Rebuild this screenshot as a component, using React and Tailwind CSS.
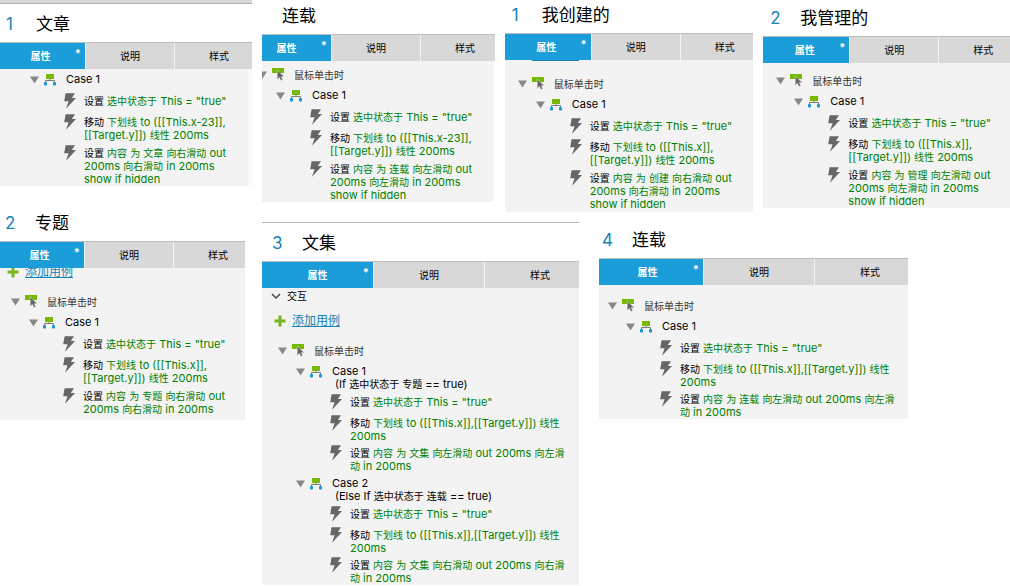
import { useState } from "react";

const panels = {
  article: {
    number: "1",
    title: "文章",
    heading: "h-[38px]",
    shift: "-ml-1",
    body: "pt-0.5 pb-px border-r-4 border-[#fafafa]",
    cases: [
      {
        name: "Case 1",
        actions: [
          ["设置", '选中状态于 This = "true"'],
          ["移动", "下划线 to ([[This.x-23]],[[Target.y]]) 线性 200ms"],
          ["设置", "内容 为 文章 向右滑动 out 200ms 向右滑动 in 200ms show if hidden"],
        ],
      },
    ],
  },
  topic: {
    number: "2",
    title: "专题",
    heading: "h-[38px]",
    shift: "-ml-[5px]",
    body: "pb-1",
    addCase: "-mt-1.5",
    event: true,
    cases: [
      {
        name: "Case 1",
        actions: [
          ["设置", '选中状态于 This = "true"'],
          ["移动", "下划线 to ([[This.x]],[[Target.y]]) 线性 200ms"],
          ["设置", "内容 为 专题 向右滑动 out 200ms 向右滑动 in 200ms"],
        ],
      },
    ],
  },
  serial: {
    title: "连载",
    heading: "h-[34px]",
    shift: "-ml-5",
    body: "pt-[5px] pb-px border-r-2 border-[#fafafa]",
    event: true,
    cases: [
      {
        name: "Case 1",
        actions: [
          ["设置", '选中状态于 This = "true"'],
          ["移动", "下划线 to ([[This.x-23]],[[Target.y]]) 线性 200ms"],
          ["设置", "内容 为 连载 向左滑动 out 200ms 向左滑动 in 200ms show if hidden"],
        ],
      },
    ],
  },
  created: {
    number: "1",
    title: "我创建的",
    heading: "h-[33px]",
    shift: "-ml-[3px]",
    body: "pt-[15px] pb-0.5",
    underline: true,
    event: true,
    cases: [
      {
        name: "Case 1",
        actions: [
          ["设置", '选中状态于 This = "true"'],
          ["移动", "下划线 to ([[This.x]],[[Target.y]]) 线性 200ms"],
          ["设置", "内容 为 创建 向右滑动 out 200ms 向右滑动 in 200ms show if hidden"],
        ],
      },
    ],
  },
  managed: {
    number: "2",
    title: "我管理的",
    heading: "h-9",
    shift: "-ml-[3px]",
    body: "pt-[9px] pb-px",
    event: true,
    cases: [
      {
        name: "Case 1",
        actions: [
          ["设置", '选中状态于 This = "true"'],
          ["移动", "下划线 to ([[This.x]],[[Target.y]]) 线性 200ms"],
          ["设置", "内容 为 管理 向左滑动 out 200ms 向左滑动 in 200ms show if hidden"],
        ],
      },
    ],
  },
  collection: {
    number: "3",
    title: "文集",
    heading: "h-[39px] border-t border-[#b5b5b5]",
    shift: "ml-0",
    body: "",
    wide: true,
    section: true,
    addCase: "mt-[7px]",
    event: true,
    cases: [
      {
        name: "Case 1",
        condition: "(If 选中状态于 专题 == true)",
        actions: [
          ["设置", '选中状态于 This = "true"'],
          ["移动", "下划线 to ([[This.x]],[[Target.y]]) 线性 200ms"],
          ["设置", "内容 为 文集 向左滑动 out 200ms 向左滑动 in 200ms"],
        ],
      },
      {
        name: "Case 2",
        condition: "(Else If 选中状态于 连载 == true)",
        actions: [
          ["设置", '选中状态于 This = "true"'],
          ["移动", "下划线 to ([[This.x]],[[Target.y]]) 线性 200ms"],
          ["设置", "内容 为 文集 向右滑动 out 200ms 向右滑动 in 200ms"],
        ],
      },
    ],
  },
  serialFour: {
    number: "4",
    title: "连载",
    heading: "h-9",
    shift: "-ml-[7px]",
    body: "pt-3",
    wide: true,
    event: true,
    cases: [
      {
        name: "Case 1",
        actions: [
          ["设置", '选中状态于 This = "true"'],
          ["移动", "下划线 to ([[This.x]],[[Target.y]]) 线性 200ms"],
          ["设置", "内容 为 连载 向左滑动 out 200ms 向左滑动 in 200ms"],
        ],
      },
    ],
  },
};

// Chinese runs are set one size smaller than the latin ones
function Mixed({ text }) {
  return text.split(/([\u4e00-\u9fff]+)/).map((part, i) =>
    i % 2 ? (
      <span key={i} className="text-[10px] leading-[13px]">
        {part}
      </span>
    ) : (
      part
    )
  );
}

function CaseIcon() {
  return (
    <svg className="w-3 h-3 shrink-0" viewBox="0 0 12 12" aria-hidden="true">
      <rect x="2" y="0" width="8" height="5" fill="#76b900" />
      <path d="M6 5v2M1.5 9V6.5h9V9" fill="none" stroke="#7a7a7a" />
      <rect x="0" y="8" width="3" height="3.5" rx="0.8" fill="#169bd5" />
      <rect x="9" y="8" width="3" height="3.5" rx="0.8" fill="#169bd5" />
    </svg>
  );
}

function EventIcon() {
  return (
    <svg className="w-3 h-3 shrink-0 overflow-visible" viewBox="0 0 12 12" aria-hidden="true">
      <rect y="-1" width="12" height="5" fill="#76b900" />
      <path
        d="M5.2 0.8v9.6l2.2-1.9 1.4 3.1 2-.9-1.4-3h2.9z"
        fill="#666"
        stroke="#f3f3f3"
        strokeWidth="0.5"
      />
    </svg>
  );
}

function BoltIcon() {
  return (
    <svg className="w-3 h-4 shrink-0" viewBox="0 0 12 16" aria-hidden="true">
      <path d="M1.6 0.3H11L7.8 5H12L2 15.8L4.6 8.3H0.2z" fill="#666" />
    </svg>
  );
}

function Toggle({ label, open, onClick }) {
  return (
    <button className="w-[9px] h-[18px] mr-[5px] shrink-0" aria-label={label} aria-expanded={open} onClick={onClick}>
      <svg className={open ? "w-[9px] h-2" : "w-[9px] h-2 -rotate-90"} viewBox="0 0 9 8">
        <path d="M0 0.5h9L4.5 7.5z" fill="#888" />
      </svg>
    </button>
  );
}

function Case({ item }) {
  const [open, setOpen] = useState(true);

  return (
    <li>
      <div className="flex items-start pl-[34px]">
        <Toggle label={item.name} open={open} onClick={() => setOpen(!open)} />
        <span className="flex items-center h-[18px]">
          <CaseIcon />
        </span>
        <div className="pl-2.5 pt-0.5 leading-[13px] min-h-[18px]">
          <p>{item.name}</p>
          {item.condition && (
            <p className="pl-[3px] -mb-px">
              <Mixed text={item.condition} />
            </p>
          )}
        </div>
      </div>
      {open && (
        <ul className="flex flex-col gap-[3px] pt-1 pl-[68px] pr-3">
          {item.actions.map(([verb, rest], i) => (
            <li key={i} className="flex items-start gap-2 min-h-[18px]">
              <BoltIcon />
              <p className="pt-0.5 text-[#008000]">
                <span className="text-black">
                  <Mixed text={verb} />
                </span>{" "}
                <Mixed text={rest} />
              </p>
            </li>
          ))}
        </ul>
      )}
    </li>
  );
}

function Tabs({ wide, underline }) {
  const width = wide ? "w-[111px]" : "w-[89px]";

  return (
    <div role="tablist" className="flex h-[27px] border-t border-[#bdbdbd] bg-[#d8d8d8] text-[10px]">
      <button role="tab" aria-selected="true" className={`${width} relative shrink-0 bg-[#1a9dd9] text-white font-bold`}>
        属性
        <span className="absolute right-1 top-[3px] text-[11px] leading-[14px]">*</span>
        {underline && <span className="absolute left-[30px] -bottom-px w-[47px] h-px bg-[#1482b5]" />}
      </button>
      <button role="tab" aria-selected="false" className={`${width} shrink-0 border-l border-[#f3f3f3]`}>
        说明
      </button>
      <button role="tab" aria-selected="false" className={`${width} shrink-0 border-l border-[#f3f3f3]`}>
        样式
      </button>
    </div>
  );
}

function Panel({ data }) {
  const [open, setOpen] = useState(true);

  return (
    <section className="min-w-0 overflow-hidden">
      <div className={data.shift}>
        <h2 className={`${data.heading} flex items-end pb-1.5 pl-2.5 text-[17px] leading-6`}>
          <span className="w-[30px] text-[#1482b5]">{data.number}</span>
          {data.title}
        </h2>
        <Tabs wide={data.wide} underline={data.underline} />
        <div className={`${data.body} bg-[#f3f3f3] overflow-hidden`}>
          {data.section && (
            <div className="flex items-center h-4 pl-[9px] gap-1.5 text-[10px]">
              <svg className="w-2.5 h-2.5" viewBox="0 0 10 10" aria-hidden="true">
                <path d="M1 3l4 4 4-4" fill="none" stroke="#444" strokeWidth="1.5" />
              </svg>
              交互
            </div>
          )}
          {data.addCase && (
            <div className={`${data.addCase} flex items-center h-5 mb-[11px] pl-3 gap-1.5`}>
              <svg className="w-3 h-3" viewBox="0 0 12 12" aria-hidden="true">
                <path d="M6 0.5v11M0.5 6h11" stroke="#7ab51d" strokeWidth="3" />
              </svg>
              <a href="#" className="text-[12px] leading-5 text-[#1482b5] underline">
                添加用例
              </a>
            </div>
          )}
          {data.event && (
            <div className="flex items-center h-[18px] mb-[3px] pl-4 text-[10px] text-[#333]">
              <Toggle label="鼠标单击时" open={open} onClick={() => setOpen(!open)} />
              <EventIcon />
              <span className="pl-2.5">鼠标单击时</span>
            </div>
          )}
          {open && (
            <ul className="flex flex-col gap-0.5">
              {data.cases.map((item) => (
                <Case key={item.name} item={item} />
              ))}
            </ul>
          )}
        </div>
      </div>
    </section>
  );
}

function App() {
  return (
    <main className="grid grid-cols-[252fr_748fr] gap-x-2.5 items-start bg-white text-black text-[11px] leading-3 font-['Inter','Noto_Sans_CJK_SC',sans-serif]">
      <div className="min-w-0">
        <div className="h-1 bg-[#d8d8d8] border-b border-[#b5b5b5]" />
        <Panel data={panels.article} />
        <div className="mt-[17px] mr-[7px]">
          <Panel data={panels.topic} />
        </div>
      </div>

      <div className="min-w-0 flex flex-col gap-2.5">
        <div className="grid grid-cols-[233fr_249fr_247fr] gap-x-2.5 items-start">
          <Panel data={panels.serial} />
          <Panel data={panels.created} />
          <Panel data={panels.managed} />
        </div>
        <div className="grid grid-cols-[317fr_309fr_82fr] gap-x-5 items-start">
          <Panel data={panels.collection} />
          <Panel data={panels.serialFour} />
        </div>
      </div>
    </main>
  );
}

export default App;
